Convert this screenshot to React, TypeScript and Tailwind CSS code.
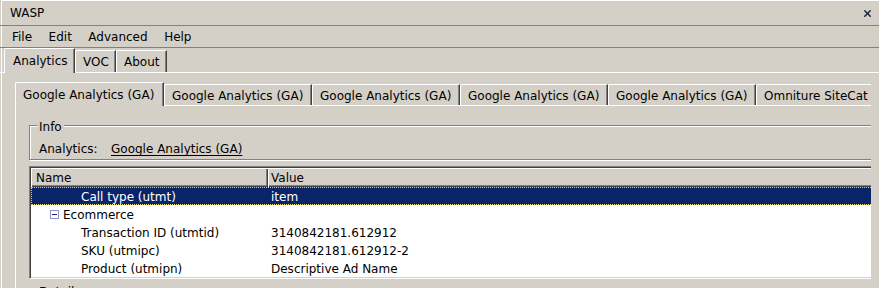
import { X } from 'lucide-react'

const outerTabs = [
  { label: 'Analytics', w: 'w-[71px]', active: true },
  { label: 'VOC', w: 'w-[41px]', active: false },
  { label: 'About', w: 'w-[51px]', active: false },
]

const innerTabs = [
  'Google Analytics (GA)',
  'Google Analytics (GA)',
  'Google Analytics (GA)',
  'Google Analytics (GA)',
  'Google Analytics (GA)',
  'Omniture SiteCat',
]

const rows = [
  { name: 'Transaction ID (utmtid)', value: '3140842181.612912' },
  { name: 'SKU (utmipc)', value: '3140842181.612912-2' },
  { name: 'Product (utmipn)', value: 'Descriptive Ad Name' },
]

function GroupLabel({ text }: { text: string }) {
  return (
    <span className="absolute left-[7px] top-[-7px] h-[14px] px-[2px] pt-px flex items-center bg-[#d4d0c8]">
      {text}
    </span>
  )
}

export default function App() {
  return (
    <div className="w-[879px] h-[288px] overflow-hidden flex flex-col bg-[#d4d0c8] text-[12px] leading-none text-black font-['DejaVu_Sans',sans-serif] shadow-[inset_1px_0_0_#d4d0c8,inset_2px_1px_0_#fff]">
      {/* title bar */}
      <div className="h-[26px] shrink-0 flex items-center justify-between pl-[10px] pr-[6px] pt-px border-b border-[#808080]">
        <span>WASP</span>
        <X size={11} strokeWidth={3.2} className="text-[#1c2744]" />
      </div>

      {/* menu */}
      <div className="h-[22px] shrink-0 flex items-center pl-[12px] pt-px gap-[16.5px] border-b border-[#808080]">
        <span>File</span>
        <span>Edit</span>
        <span>Advanced</span>
        <span>Help</span>
      </div>

      {/* outer tabs */}
      <div className="h-[24px] shrink-0 flex items-end pl-[4px]">
        {outerTabs.map((t) =>
          t.active ? (
            <div
              key={t.label}
              className={`${t.w} h-[25px] -mb-px relative z-10 flex items-center pl-[8px] bg-[#d4d0c8] border-l border-t border-white border-r border-r-[#404040] shadow-[inset_-1px_0_0_#808080] rounded-tl-[2px]`}
            >
              {t.label}
            </div>
          ) : (
            <div
              key={t.label}
              className={`${t.w} h-[22px] flex items-center pl-[7px] pt-[1px] border-l border-t border-white border-r border-r-[#404040] shadow-[inset_-1px_0_0_#808080] rounded-tl-[2px]`}
            >
              {t.label}
            </div>
          )
        )}
      </div>

      {/* outer panel */}
      <div className="flex-1 border-t border-white pt-[9px]">
        <div className="ml-[15px] w-[856px] overflow-hidden">
          <div className="w-[960px]">
            {/* inner tabs */}
            <div className="h-[23px] flex items-end">
              {innerTabs.map((t, i) =>
                i === 0 ? (
                  <div
                    key={i}
                    className="w-[149px] h-[24px] shrink-0 -mb-px relative z-10 flex items-center pl-[7px] bg-[#d4d0c8] border-l border-t border-white border-r border-r-[#404040] shadow-[inset_-1px_0_0_#808080] rounded-tl-[2px]"
                  >
                    {t}
                  </div>
                ) : (
                  <div
                    key={i}
                    className="w-[148px] h-[21px] shrink-0 flex items-center pl-[7px] pt-[1px] border-l border-t border-white border-r border-r-[#404040] shadow-[inset_-1px_0_0_#808080] rounded-tl-[2px] whitespace-nowrap"
                  >
                    {t}
                  </div>
                )
              )}
            </div>

            {/* inner panel */}
            <div className="h-[200px] border-t border-l border-white pl-[13px] pt-[19px]">
              {/* Info group */}
              <div className="relative h-[35px] border border-[#808080] shadow-[inset_1px_1px_0_#fff,1px_1px_0_#fff] pt-[16px] pl-[9px]">
                <GroupLabel text="Info" />
                <div className="flex items-center h-[14px]">
                  <span className="w-[72px]">Analytics:</span>
                  <span className="underline underline-offset-[2px]">Google Analytics (GA)</span>
                </div>
              </div>

              {/* list view */}
              <div className="mt-[6px] h-[113px] bg-white border border-t-[#808080] border-l-[#808080] border-b-white border-r-white shadow-[inset_1px_1px_0_#404040,inset_-1px_-1px_0_#d4d0c8] p-px">
                <div className="h-[19px] flex bg-[#d4d0c8]">
                  <div className="w-[237px] h-full flex items-center pl-[5px] pt-px shadow-[inset_1px_1px_0_#fff,inset_-1px_-1px_0_#404040,inset_-2px_-2px_0_#808080]">
                    Name
                  </div>
                  <div className="flex-1 h-full flex items-center pl-[3px] pt-px shadow-[inset_1px_1px_0_#fff,inset_0_-1px_0_#404040,inset_0_-2px_0_#808080]">
                    Value
                  </div>
                </div>

                <div className="h-[18px] flex items-center pt-px bg-[#0a246a] text-white border border-dotted border-t-[#c8c8c8] border-l-[#c8c8c8] border-b-[#f0e08a] border-r-transparent">
                  <span className="w-[236px] pl-[49px]">Call type (utmt)</span>
                  <span className="pl-[3px]">item</span>
                </div>

                <div className="h-[18px] flex items-center pt-px">
                  <span className="w-[237px] flex items-center pl-[19px]">
                    <span className="w-[9px] h-[9px] border border-[#9494c8] bg-white flex items-center justify-center mr-[4px] -mt-px">
                      <span className="w-[5px] h-px bg-[#20206a]" />
                    </span>
                    Ecommerce
                  </span>
                </div>

                {rows.map((r) => (
                  <div key={r.name} className="h-[18px] flex items-center pt-px">
                    <span className="w-[237px] pl-[50px]">{r.name}</span>
                    <span className="pl-[3px]">{r.value}</span>
                  </div>
                ))}
              </div>

              {/* Details group */}
              <div className="relative mt-[11px] h-[40px] border border-[#808080] shadow-[inset_1px_1px_0_#fff,1px_1px_0_#fff]">
                <GroupLabel text="Details" />
              </div>
            </div>
          </div>
        </div>
      </div>
    </div>
  )
}
